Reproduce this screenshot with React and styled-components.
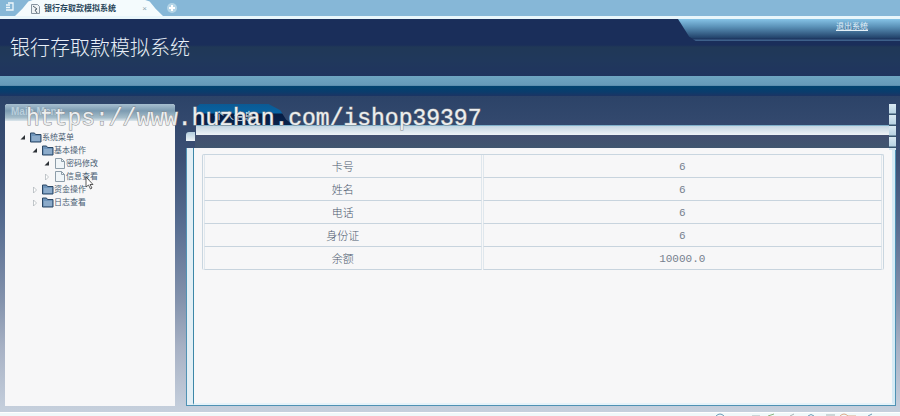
import React from 'react';
import styled, { createGlobalStyle } from 'styled-components';

const GlobalStyle = createGlobalStyle`
    * {
        box-sizing: border-box;
    }
    body {
        margin: 0;
        font-family: "Liberation Sans", "Noto Sans CJK SC", sans-serif;
        font-size: 11px;
        color: #4c5a6e;
    }
`
const Page = styled.div`
    position: relative;
    display: flex;
    flex-direction: column;
    min-height: 100vh;
    overflow: hidden;
    background: #1b2f5c;
`
const BrowserBar = styled.div`
    display: flex;
    align-items: flex-end;
    height: 19px;
    padding: 0 5px;
    background: #86b7d7;
    border-bottom: 3px solid #e9f6fb;
`
const BarButton = styled.button`
    display: flex;
    height: 16px;
    padding: 2px 0 0;
    border: 0;
    background: none;
`
const BrowserTab = styled.div`
    display: flex;
    align-items: center;
    justify-content: space-between;
    width: 148px;
    height: 16px;
    padding: 2px 16px 0 16px;
    background: #f4fbfd;
    clip-path: polygon(0 100%, 5% 55%, 9% 10%, 12% 0, 88% 0, 91% 10%, 95% 55%, 100% 100%);
`
const TabLabel = styled.span`
    display: flex;
    align-items: center;
    gap: 4px;
    font-size: 8px;
    line-height: 12px;
    font-weight: bold;
    color: #29465a;
`
const TabClose = styled.button`
    padding: 0;
    border: 0;
    background: none;
    font-size: 8px;
    line-height: 12px;
    color: #8fa5b0;
`
const Header = styled.header`
    display: flex;
    justify-content: space-between;
    height: 57px;
    background: linear-gradient(#1a2e5a 0, #1a2e5a 26px, #203857 28px, #20385c 42px, #20345f 100%);
`
const Title = styled.h1`
    margin: 0;
    padding: 17px 0 0 10px;
    font-size: 20px;
    line-height: 24px;
    font-weight: 300;
    color: #e8eff7;
`
const UserBar = styled.div`
    width: 222px;
    height: 22px;
    padding: 0 32px 0 0;
    text-align: right;
    background: linear-gradient(#86c3e6, #5b92b8 35%, #23446c 85%, #1b305a 92%, #3d608a 94%, #3d608a);
    clip-path: polygon(0 0, 100% 0, 100% 100%, 8% 100%, 5% 80%);
`
const Logout = styled.a`
    font-size: 8px;
    line-height: 12px;
    color: #e3f0f8;
`
const Stripe = styled.div`
    height: 20px;
    background: linear-gradient(#6fa5c2, #659ab9 45%, #5384a6 50%, #014370 51%, #0b3c6c 80%, #1c3463);
`
const Body = styled.main`
    display: grid;
    grid-template-columns: 170px minmax(0, 1fr);
    gap: 11px;
    flex: 1;
    padding: 8px 4px 6px 5px;
    background: linear-gradient(#2c4368, #3c5075 20%, #566c90 40%, #8493ad 65%, #a8b2c5 80%, #c6d0dd);
`
const Sidebar = styled.aside`
    background: #f7f7f8;
    border-radius: 3px 3px 0 0;
    overflow: hidden;
`
const SidebarHead = styled.h2`
    height: 17px;
    margin: 0;
    padding: 1px 6px;
    font-size: 10px;
    line-height: 13px;
    color: #b9cedb;
    background: linear-gradient(#a7bfd0, #7c9bb1 40%, #a5bdca 80%, #dce6ec);
`
const Tree = styled.ul`
    margin: 0;
    padding: 10px 0 0 14px;
    list-style: none;
    & & {
        padding: 0 0 0 12px;
    }
`
const TreeRow = styled.a`
    display: flex;
    align-items: center;
    height: 13px;
    font-size: 8px;
    line-height: 13px;
    color: #4a5e74;
    text-decoration: none;
`
const Main = styled.section`
    display: flex;
    flex-direction: column;
`
const TabStrip = styled.div`
    display: flex;
    height: 21px;
    padding-left: 10px;
`
const PanelTab = styled.h2`
    width: 98px;
    margin: 0;
    padding: 5px 0 0 18px;
    font-size: 10px;
    line-height: 16px;
    font-weight: normal;
    color: #dceaf4;
    background: linear-gradient(#0b5a94 0, #0763a3 9px, #061c43 10px, #08234b);
    clip-path: polygon(0 15%, 4% 0, 74% 0, 86% 30%, 92% 75%, 100% 100%, 0 100%);
`
const PanelTop = styled.div`
    height: 10px;
    margin: 0 7px 0 10px;
    border-top: 1px solid #80b1cb;
    background: linear-gradient(#c4d6e2, #f0f4f7);
`
const PanelBar = styled.div`
    height: 13px;
    margin: 0 7px 0 9px;
    background: linear-gradient(#435070, #40566f);
`
const PanelFrame = styled.div`
    display: flex;
    flex: 1;
    border: 1px solid #4f92b4;
    border-top: 0;
    background: #e3eff5;
`
const Panel = styled.div`
    flex: 1;
    margin-left: 6px;
    padding: 6px 8px 0 8px;
    border-left: 1px solid #3c87a8;
    border-right: 3px solid #d6ebf5;
    border-bottom: 2px solid #e6f3f9;
    background: #f7f7f8;
`
const InfoTable = styled.table`
    width: 100%;
    border: 1px solid #c9d6e0;
    border-bottom: 0;
    border-radius: 2px;
    border-spacing: 1px 0;
    font-size: 11px;
`
const Label = styled.th`
    width: 41%;
    height: 23px;
    padding: 0;
    border: 1px solid #dfe7ed;
    border-top: 0;
    border-bottom-color: #c8d4de;
    font-weight: 300;
`
const Value = styled.td`
    padding: 2px 0 0;
    border: 1px solid #dfe7ed;
    border-top: 0;
    border-bottom-color: #c8d4de;
    text-align: center;
    font-family: "Liberation Mono", monospace;
    color: #76808e;
`
const StatusBar = styled.footer`
    display: flex;
    justify-content: flex-end;
    height: 4px;
    padding-right: 24px;
    background: #f0f9fa;
    border-top: 1px solid #fff;
    overflow: hidden;
`
const ScrollMarks = styled.div`
    position: absolute;
    top: 104px;
    right: 4px;
    width: 7px;
    height: 46px;
    background: repeating-linear-gradient(#d9e9f2 0, #b9d4e3 9px, #38566f 10px, #38566f 11px);
`
const Corner = styled.div`
    position: absolute;
    top: 132px;
    left: 186px;
    width: 9px;
    height: 9px;
    border-radius: 3px 0 0 0;
    background: linear-gradient(#b3cede, #eef4f8);
`
const Watermark = styled.div`
    position: absolute;
    top: 105px;
    left: 26px;
    font-family: "Liberation Mono", monospace;
    font-size: 23px;
    line-height: 28px;
    color: #eceeef;
    -webkit-text-stroke: 1px #8a8d90;
    paint-order: stroke fill;
    pointer-events: none;
`
const Pointer = styled.svg`
    position: absolute;
    top: 176px;
    left: 85px;
`

const Arrow = ({ open }) => (
    <svg width='11' height='11' viewBox='0 0 11 11'>
        {open
            ? <path d='M6 3v4.500H1.500z' fill='#2c3136' />
            : <path d='M2.500 3l3 3-3 3z' fill='#fff' stroke='#a9b0b6' strokeWidth='.7' />}
    </svg>
)

const Folder = () => (
    <svg width='12' height='11' viewBox='0 0 12 11'>
        <path d='M.5 1h4l1 1.500H11v7.500H.5z' fill='#6e94ba' stroke='#2b4664' />
        <path d='M2 4h8v5H2z' fill='#8cabca' />
    </svg>
)

const PageIcon = () => (
    <svg width='12' height='11' viewBox='0 0 12 11'>
        <path d='M1.500.5h6l3 3v7h-9z' fill='#f0f5f8' stroke='#8d9da9' />
        <path d='M7.500.5v3h3' fill='none' stroke='#8d9da9' />
    </svg>
)

const TreeItem = ({ text, open, leaf, children }) => (
    <li>
        <TreeRow href='#'>
            <Arrow open={open} />
            {leaf ? <PageIcon /> : <Folder />}
            {text}
        </TreeRow>
        {children && <Tree>{children}</Tree>}
    </li>
)

const rows = [
    ['卡号', '6'],
    ['姓名', '6'],
    ['电话', '6'],
    ['身份证', '6'],
    ['余额', '10000.0'],
]

const App = () => (
    <Page>
        <GlobalStyle />
        <BrowserBar>
            <BarButton aria-label='Tabs'>
                <svg width='10' height='10' viewBox='0 0 10 10'>
                    <path d='M3 1h5v7H1M1 3h4M1 5.500h4' fill='none' stroke='#eef8fc' strokeWidth='1.300' />
                </svg>
            </BarButton>
            <BrowserTab>
                <TabLabel>
                    <svg width='9' height='10' viewBox='0 0 9 10'>
                        <path d='M.5.5h6l2 2v7h-8z' fill='#eef3f5' stroke='#8795a0' />
                        <path d='M2 2l4 3-2 1 2 3' fill='none' stroke='#54636d' />
                    </svg>
                    银行存取款模拟系统
                </TabLabel>
                <TabClose aria-label='Close'>×</TabClose>
            </BrowserTab>
            <BarButton aria-label='New tab'>
                <svg width='18' height='12' viewBox='0 0 18 12'>
                    <circle cx='9' cy='6' r='5' fill='#b4d5e7' />
                    <path d='M9 3v6M6 6h6' stroke='#fff' strokeWidth='2' />
                </svg>
            </BarButton>
        </BrowserBar>
        <Header>
            <Title>银行存取款模拟系统</Title>
            <UserBar>
                <Logout href='#'>退出系统</Logout>
            </UserBar>
        </Header>
        <Stripe />
        <Body>
            <Sidebar>
                <SidebarHead>Main Menu</SidebarHead>
                <Tree>
                    <TreeItem text='系统菜单' open>
                        <TreeItem text='基本操作' open>
                            <TreeItem text='密码修改' open leaf />
                            <TreeItem text='信息查看' leaf />
                        </TreeItem>
                        <TreeItem text='资金操作' />
                        <TreeItem text='日志查看' />
                    </TreeItem>
                </Tree>
            </Sidebar>
            <Main>
                <TabStrip>
                    <PanelTab>个人信息</PanelTab>
                </TabStrip>
                <PanelTop />
                <PanelBar />
                <PanelFrame>
                    <Panel>
                        <InfoTable>
                            <tbody>
                                {rows.map(([label, value]) => (
                                    <tr key={label}>
                                        <Label scope='row'>{label}</Label>
                                        <Value>{value}</Value>
                                    </tr>
                                ))}
                            </tbody>
                        </InfoTable>
                    </Panel>
                </PanelFrame>
            </Main>
        </Body>
        <StatusBar>
            <svg width='162' height='3' viewBox='0 0 162 3'>
                <path d='M2 3q4-4 8 0M94 3q3-3 6 0M154 3l4-2' fill='none' stroke='#6b9bb5' />
                <path d='M38 3h8M76 3l4-2M112 2h9' stroke='#a7b3b4' />
                <path d='M54 3l6-2' stroke='#8bb482' />
                <path d='M126 3q4-4 8 0h8' fill='none' stroke='#dba989' />
            </svg>
        </StatusBar>
        <ScrollMarks />
        <Corner />
        <Watermark>https://www.huzhan.com/ishop39397</Watermark>
        <Pointer width='9' height='14' viewBox='0 0 9 14'>
            <path d='M1 1v10l2.500-2 2 4 1.500-1-2-3.500h3z' fill='#fff' stroke='#333' strokeWidth='.8' />
        </Pointer>
    </Page>
)

export default App;
